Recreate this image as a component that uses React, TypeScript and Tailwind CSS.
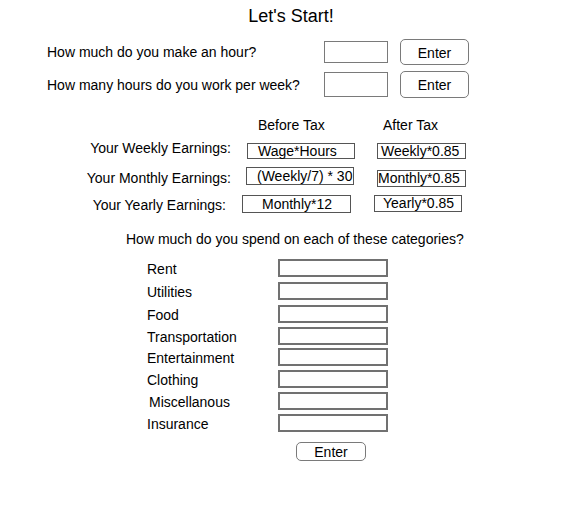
interface CategoryRow {
    name: string;
    rowClass: string;
    labelClass: string;
}

// rows in the mockup are not evenly spaced, so each keeps its own height
const categories: CategoryRow[] = [
    { name: "Rent", rowClass: "h-[23px]", labelClass: "w-[131px]" },
    { name: "Utilities", rowClass: "h-[23px]", labelClass: "w-[131px]" },
    { name: "Food", rowClass: "h-[22px]", labelClass: "w-[131px]" },
    { name: "Transportation", rowClass: "h-[21px]", labelClass: "w-[131px]" },
    { name: "Entertainment", rowClass: "h-[22px]", labelClass: "w-[131px]" },
    { name: "Clothing", rowClass: "h-[22px]", labelClass: "w-[131px]" },
    { name: "Miscellanous", rowClass: "h-[22px]", labelClass: "w-[131px] pl-[2px]" },
    { name: "Insurance", rowClass: "h-[18px]", labelClass: "w-[131px]" },
];

function EnterButton({ className }: { className: string }) {
    return (
        <button className={`border border-[#7a7a7a] rounded-[5px] bg-white text-[14px] leading-none text-black flex items-center justify-center ${className}`}>
            Enter
        </button>
    );
}

export default function App() {
    return (
        <div className="w-[578px] h-[521px] bg-white text-black font-['Liberation_Sans',Arial,Helvetica,sans-serif] text-[14px] leading-[16px] flex flex-col">

            <h1 className="mt-[6px] text-[18px] leading-[20px] text-center pl-[4px]">Let's Start!</h1>

            {/* wage + hours */}
            <div className="mt-[13px] h-[26px] flex items-center pl-[47px]">
                <span className="w-[277px]">How much do you make an hour?</span>
                <div className="w-[64px] h-[22px] border border-[#7a7a7a]" />
                <EnterButton className="ml-[12px] w-[69px] h-[26px] pt-[1px]" />
            </div>

            <div className="mt-[6px] h-[27px] flex items-center pl-[47px]">
                <span className="w-[277px]">How many hours do you work per week?</span>
                <div className="w-[64px] h-[25px] border border-[#7a7a7a]" />
                <EnterButton className="ml-[12px] w-[69px] h-[27px] pt-[1px]" />
            </div>

            {/* earnings table */}
            <div className="mt-[19px] flex pl-[258px]">
                <span className="w-[125px]">Before Tax</span>
                <span>After Tax</span>
            </div>

            <div className="mt-[7px] flex items-start">
                <span className="w-[231px] text-right">Your Weekly Earnings:</span>
                <div className="ml-[16px] mt-[3px] w-[108px] h-[16px] border border-[#555] flex items-center pl-[10px] leading-[14px]">Wage*Hours</div>
                <div className="ml-[22px] mt-[3px] w-[89px] h-[16px] border border-[#555] flex items-center pl-[3px] leading-[14px]">Weekly*0.85</div>
            </div>

            <div className="mt-[8px] flex items-start">
                <span className="mt-[3px] w-[231px] text-right">Your Monthly Earnings:</span>
                <div className="ml-[15px] w-[108px] h-[18px] border border-[#555] flex items-center pl-[10px] leading-[16px] whitespace-nowrap">(Weekly/7) * 30</div>
                <div className="ml-[23px] mt-[3px] w-[89px] h-[17px] border border-[#555] flex items-center pl-[0px] leading-[15px]">Monthly*0.85</div>
            </div>

            <div className="mt-[8px] flex items-start">
                <span className="mt-[2px] w-[226px] text-right">Your Yearly Earnings:</span>
                <div className="ml-[16px] w-[109px] h-[18px] border border-[#555] flex items-center pl-[19px] leading-[16px]">Monthly*12</div>
                <div className="ml-[23px] w-[88px] h-[17px] border border-[#555] flex items-center pl-[8px] leading-[15px]">Yearly*0.85</div>
            </div>

            {/* spending */}
            <p className="mt-[18px] pl-[126px]">How much do you spend on each of these categories?</p>

            <div className="mt-[12px] flex flex-col">
                {categories.map((category) => (
                    <div key={category.name} className={`flex items-start pl-[147px] ${category.rowClass}`}>
                        <span className={`mt-[2px] ${category.labelClass}`}>
                            {category.name}
                        </span>
                        <div className="w-[110px] h-[18px] border-2 border-[#717171]" />
                    </div>
                ))}
            </div>

            <div className="mt-[10px] pl-[296px]">
                <EnterButton className="w-[70px] h-[19px]" />
            </div>

        </div>
    );
}
